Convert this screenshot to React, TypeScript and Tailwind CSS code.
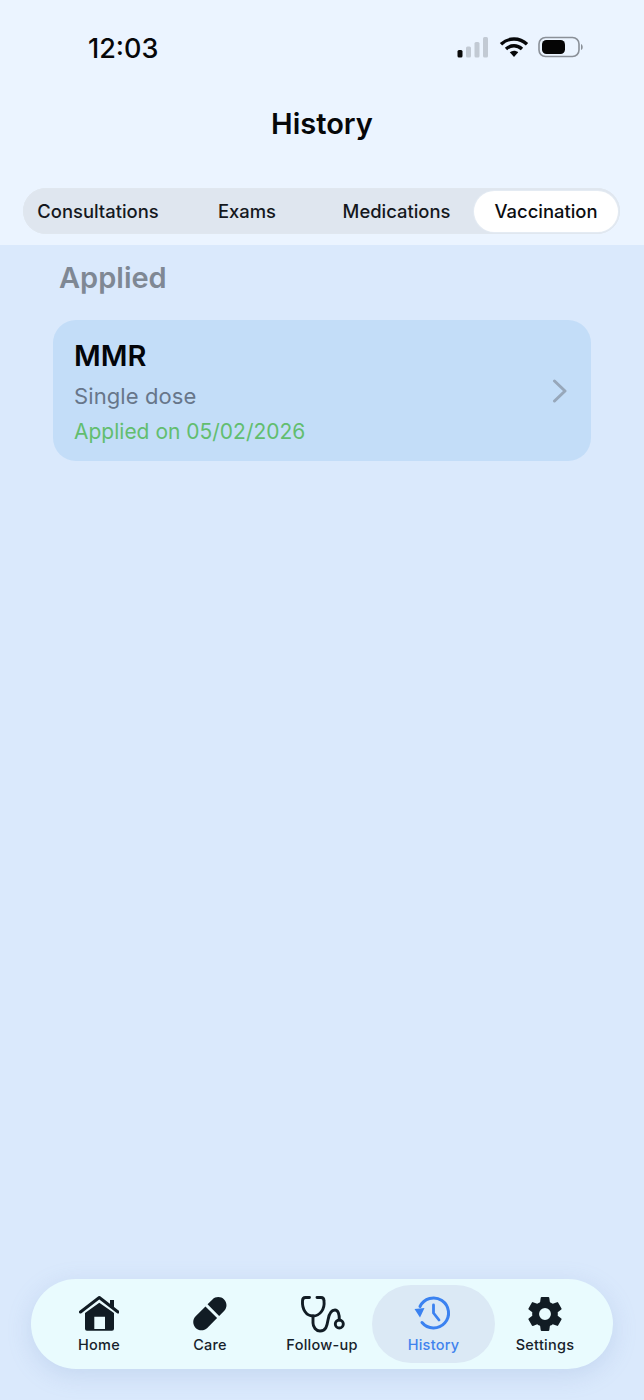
import { IoSettingsSharp } from "react-icons/io5";

function Status() {
  return (
    <div className="flex h-[36px] items-center justify-between pl-[88px] pr-[60px]">
      <span className="mt-[2px] text-[27px] leading-[36px] font-medium tracking-[0px] text-[#060709]">12:03</span>
      <div className="flex items-center">
        <svg width="33" height="22" viewBox="0 0 33 22" className="mr-[9px] mb-[2px]">
          <rect x="0.5" y="14" width="5" height="7.5" rx="1.5" fill="#0a0a0a" />
          <rect x="9" y="10.5" width="5" height="11" rx="1.5" fill="#c2cad4" />
          <rect x="17.5" y="6" width="5" height="15.5" rx="1.5" fill="#c2cad4" />
          <rect x="26" y="1" width="5" height="20.5" rx="1.5" fill="#c2cad4" />
        </svg>
        <svg width="30" height="22" viewBox="0 0 30 22" className="mr-[9px] mb-[2px]">
          <path d="M2 8.2C9.5 1.2 20.5 1.2 28 8.2" fill="none" stroke="#060709" strokeWidth="3.4" />
          <path d="M7 13C11.8 8.6 18.2 8.6 23 13" fill="none" stroke="#060709" strokeWidth="3.4" />
          <path d="M10.8 16.2 15 21 19.2 16.2C16.6 14.2 13.4 14.2 10.8 16.2Z" fill="#060709" />
        </svg>
        <svg width="46" height="22" viewBox="0 0 46 22" className="mb-[2px]">
          <rect x="1" y="1.5" width="40" height="19" rx="6.5" fill="none" stroke="#8a9098" strokeWidth="1.6" />
          <rect x="4" y="4" width="23" height="14" rx="4.5" fill="#050505" />
          <path d="M43 8C45 8.5 45.5 13.5 43 14Z" fill="#8a9098" />
        </svg>
      </div>
    </div>
  );
}

function Tab({ label, active, w }: { label: string; active?: boolean; w: string }) {
  return (
    <div
      className={`flex h-[41px] items-center justify-center pt-[1px] text-[18.4px] font-medium tracking-[0px] ${w} ${
        active
          ? "rounded-full bg-white text-[#0b0d11] shadow-[0_0_0_1px_#e4ebf3]"
          : "text-[#15181d]"
      }`}
    >
      {label}
    </div>
  );
}

function Home() {
  return (
    <svg width="40" height="38" viewBox="0 0 40 38">
      <path d="M1.5 17 20.3 2.5 39 17" fill="none" stroke="#111c24" strokeWidth="3" strokeLinecap="round" strokeLinejoin="round" />
      <rect x="31" y="5" width="4" height="8" fill="#111c24" />
      <path
        fillRule="evenodd"
        d="M6 18 20.3 7.7 35 18V33.7A2 2 0 0 1 33 35.7H8A2 2 0 0 1 6 33.7ZM15.3 21.7V34H26V21.7Z"
        fill="#111c24"
      />
    </svg>
  );
}

function Stethoscope() {
  return (
    <svg width="46" height="38" viewBox="0 0 46 38" fill="none" stroke="#111c24" strokeWidth="2.9" strokeLinecap="round">
      <path d="M10.5 2.5H6.5C4.5 2.5 3.5 4 3.5 6C3 14 7 21 14 21C21 21 26 14 25 6C25 4 24 2.5 22 2.5H18" />
      <path d="M14 21V28C14 32 17 36 21 36C27 36 28 31 29 25C30 19 32 15 36 15C39 15 40.5 19 40.3 25" />
      <circle cx="40.3" cy="29" r="4" />
    </svg>
  );
}

function Pill() {
  return (
    <svg width="34" height="34" viewBox="0 0 36 36" className="mb-[1px]">
      <path d="M2.8 20.4 13.2 10 25.5 22.3 15.1 32.7C11.7 36.1 6.2 36.1 2.8 32.7 -0.6 29.3 -0.6 23.8 2.8 20.4Z" fill="#111c24" />
      <path d="M15.4 7.8 20.6 2.6C24 -0.8 29.5 -0.8 32.9 2.6 36.3 6 36.3 11.5 32.9 14.9L27.7 20.1Z" fill="#111c24" />
    </svg>
  );
}

function HistoryIcon() {
  return (
    <svg width="40" height="38" viewBox="0 0 40 38" fill="none">
      <path d="M6 11.5A15 15 0 1 1 8 27.5" stroke="#3b82f0" strokeWidth="3" strokeLinecap="round" />
      <path d="M0.5 14 10.5 13 6 22.5Z" fill="#3b82f0" />
      <path d="M19.5 10V18L25 25" stroke="#3b82f0" strokeWidth="2.8" strokeLinecap="round" strokeLinejoin="round" />
    </svg>
  );
}

function NavItem({ label, icon, active, w }: { label: string; icon: React.ReactNode; active?: boolean; w: string }) {
  return (
    <div
      className={`flex h-[78px] flex-col items-center justify-start pt-[10px] ${w} ${
        active ? "rounded-[39px] bg-[#dbe9f5]" : ""
      }`}
    >
      <div className="flex h-[38px] items-center justify-center">{icon}</div>
      <span
        className={`mt-[3px] text-[14.5px] leading-[18px] font-medium tracking-[0.25px] ${
          active ? "text-[#3f83ee]" : "text-[#17222b]"
        }`}
      >
        {label}
      </span>
    </div>
  );
}

export default function App() {
  return (
    <div className="flex h-[1400px] w-[644px] flex-col overflow-hidden bg-[#dae9fc] font-['Inter',sans-serif]">
      <header className="h-[245px] shrink-0 bg-[#ebf4ff] pt-[30px]">
        <Status />
        <h1 className="mt-[40px] text-center text-[29px] leading-[36px] font-semibold text-[#060709]">History</h1>
        <div className="mx-[23px] mt-[46px] flex h-[46px] w-[597px] items-center rounded-full bg-[#dfe6ef] px-[2px] shadow-[inset_0_0_0_1px_#e0e7ef]">
          <Tab label="Consultations" w="w-[146px]" />
          <Tab label="Exams" w="w-[152px]" />
          <Tab label="Medications" w="w-[147px] mr-[4px]" />
          <Tab label="Vaccination" active w="w-[144px]" />
        </div>
      </header>
      <main className="flex flex-1 flex-col px-[53px]">
        <h2 className="mt-[14px] pl-[6px] text-[29px] leading-[38px] font-semibold text-[#7f8894]">Applied</h2>
        <div className="mt-[23px] flex h-[141px] items-center justify-between rounded-[23px] bg-[#c3ddf8] pr-[24px] pl-[21px]">
          <div className="flex flex-col self-start pt-[18px]">
            <span className="text-[29px] leading-[36px] font-semibold text-[#03050a]">MMR</span>
            <span className="mt-[8px] text-[22px] leading-[28px] tracking-[0.1px] text-[#67768a]">Single dose</span>
            <span className="mt-[8px] text-[21px] leading-[28px] text-[#62bd6f]">Applied on 05/02/2026</span>
          </div>
          <svg width="15" height="24" viewBox="0 0 15 24" fill="none" stroke="#97a7ba" strokeWidth="3" strokeLinecap="round" strokeLinejoin="round">
            <path d="M2.5 2 13 12 2.5 22" />
          </svg>
        </div>
      </main>
      <nav className="mx-[31px] mb-[31px] flex h-[90px] w-[582px] items-center rounded-[45px] bg-[#e9fbfe] pl-[12px] shadow-[0_6px_24px_rgba(120,150,200,0.22)]">
        <NavItem label="Home" w="w-[112px]" icon={<Home />} />
        <NavItem label="Care" w="w-[110px]" icon={<Pill />} />
        <NavItem label="Follow-up" w="w-[100px] ml-[7px]" icon={<Stethoscope />} />
        <NavItem label="History" active w="w-[123px]" icon={<HistoryIcon />} />
        <NavItem label="Settings" w="w-[100px]" icon={<IoSettingsSharp size={38} color="#111c24" />} />
      </nav>
    </div>
  );
}
